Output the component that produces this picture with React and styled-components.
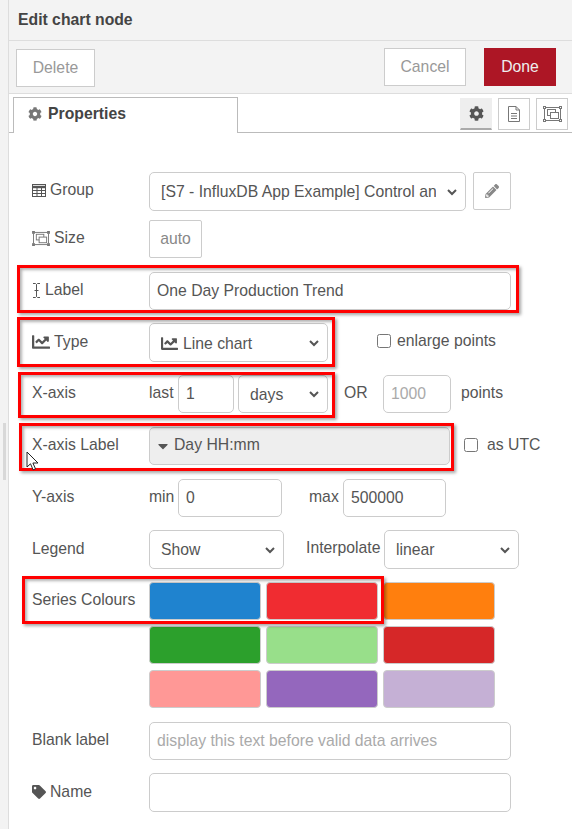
import React from 'react';
import styled, { createGlobalStyle } from 'styled-components';
import { FaCog, FaPencilAlt, FaTag, FaChartLine, FaCaretDown } from 'react-icons/fa';

const GlobalStyle = createGlobalStyle`
  html, body {
    margin: 0;
    padding: 0;
    background: #fff;
  }
  body {
    font-family: "Liberation Sans", Arial, sans-serif;
    font-size: 15.75px;
    color: #555;
  }
`;

const Page = styled.div`
  position: relative;
  display: flex;
  width: 572px;
  height: 829px;
  overflow: hidden;
`;

const Gutter = styled.div`
  position: relative;
  flex: 0 0 8px;
  background: #f3f3f3;
  border-right: 1px solid #ddd;
`;

const GutterHandle = styled.div`
  position: absolute;
  top: 423px;
  left: 3px;
  width: 3px;
  height: 57px;
  background: #d8d8d8;
`;

const Tray = styled.div`
  flex: 1;
  display: flex;
  flex-direction: column;
  min-width: 0;
`;

const TrayTitle = styled.div`
  height: 41px;
  box-sizing: border-box;
  padding: 11px 0 0 9px;
  background: #f3f3f3;
  border-bottom: 1px solid #ddd;
  font-size: 15.75px;
  font-weight: bold;
  line-height: 18px;
  color: #444;
`;

const Toolbar = styled.div`
  display: flex;
  height: 53px;
  box-sizing: border-box;
  padding: 7px 16px 0 7px;
  background: #f3f3f3;
  border-bottom: 1px solid #ddd;
`;

const Spacer = styled.div`
  flex: 1;
`;

const TrayButton = styled.button`
  box-sizing: border-box;
  width: ${p => p.$w}px;
  height: 38px;
  margin-left: ${p => p.$ml || 0}px;
  margin-top: ${p => p.$mt || 0}px;
  padding: 0;
  background: ${p => (p.$primary ? '#ad1625' : '#fff')};
  border: 1px solid ${p => (p.$primary ? '#ad1625' : '#ccc')};
  color: ${p => (p.$primary ? '#eee' : '#999')};
  font: 15.75px "Liberation Sans", Arial, sans-serif;
`;

const TabBar = styled.div`
  display: flex;
  height: 39px;
  box-sizing: border-box;
  padding: 3px 4px 0 4px;
  border-bottom: 1px solid #bbb;
`;

const Tab = styled.div`
  display: flex;
  align-items: flex-start;
  gap: 6px;
  box-sizing: border-box;
  width: 225px;
  height: 36px;
  padding: 7px 0 0 14px;
  background: #fff;
  border: 1px solid #bbb;
  border-bottom: none;
  font-size: 15.75px;
  font-weight: bold;
  line-height: 18px;
  color: #444;
  svg {
    color: #777;
    font-size: 14px;
    margin-top: 2px;
  }
`;

const TabIcons = styled.div`
  display: flex;
  gap: 6px;
  margin-left: auto;
`;

const TabIcon = styled.div`
  display: flex;
  align-items: center;
  justify-content: center;
  box-sizing: border-box;
  width: 32px;
  height: 32px;
  margin-top: 1px;
  background: ${p => (p.$active ? '#eee' : '#fff')};
  border: 1px solid #ccc;
  border-bottom: ${p => (p.$active ? '2px solid #aaa' : '1px solid #ccc')};
  border-color: ${p => (p.$active ? '#eee #eee #aaa' : '#ccc')};
  color: ${p => (p.$active ? '#555' : '#777')};
  font-size: 15px;
`;

const Form = styled.div`
  padding: 39px 0 0 23px;
`;

const Row = styled.div`
  display: flex;
  align-items: flex-start;
  margin-top: ${p => p.$mt || 0}px;
`;

const Label = styled.label`
  display: flex;
  align-items: center;
  gap: 4px;
  flex: 0 0 117px;
  height: ${p => p.$h || 36}px;
  color: #555;
  svg {
    flex: none;
    color: #555;
  }
`;

const ChartGlyph = styled(FaChartLine)`
  font-size: 18px;
`;

const TagGlyph = styled(FaTag)`
  font-size: 14px;
`;

const Inline = styled.span`
  display: flex;
  align-items: center;
  height: 36px;
  margin-left: ${p => p.$ml || 0}px;
  width: ${p => (p.$w ? `${p.$w}px` : 'auto')};
  color: #555;
`;

const Input = styled.input`
  box-sizing: border-box;
  width: ${p => p.$w}px;
  height: ${p => p.$h || 38}px;
  margin-left: ${p => p.$ml || 0}px;
  padding: 0 7px;
  background: #fff;
  border: 1px solid #ccc;
  border-radius: 5px;
  outline: none;
  font: 15.75px "Liberation Sans", Arial, sans-serif;
  color: #555;
  &::placeholder {
    color: #aaa;
    opacity: 1;
  }
`;

const chevronUrl = `url("data:image/svg+xml,%3Csvg xmlns='http://www.w3.org/2000/svg' width='12' height='12' viewBox='0 0 12 12'%3E%3Cpath d='M2 4l4 4 4-4' fill='none' stroke='%23555' stroke-width='2'/%3E%3C/svg%3E")`;

const Select = styled.select`
  appearance: none;
  box-sizing: border-box;
  width: ${p => p.$w}px;
  height: ${p => p.$h || 39}px;
  margin: 0 0 0 ${p => p.$ml || 0}px;
  padding: 0 29px 0 11px;
  background: #fff ${chevronUrl} no-repeat right 7px center;
  border: 1px solid #ccc;
  border-radius: 5px;
  outline: none;
  font: 15.75px "Liberation Sans", Arial, sans-serif;
  color: #555;
`;

const TypeField = styled.div`
  display: flex;
  align-items: center;
  gap: 5px;
  box-sizing: border-box;
  width: 179px;
  height: 39px;
  padding: 2px 7px 0 11px;
  background: #fff;
  border: 1px solid #ccc;
  border-radius: 5px;
  color: #555;
  svg {
    font-size: 17px;
  }
`;

const Chevron = styled.svg`
  margin-left: auto;
  margin-top: -2px;
  width: 12px;
  height: 12px;
`;

const FormatField = styled.div`
  display: flex;
  align-items: center;
  gap: 3px;
  box-sizing: border-box;
  width: 301px;
  height: 38px;
  padding: 0 0 2px 5px;
  background: #eee;
  border: 1px solid #ccc;
  border-radius: 5px;
  color: #555;
  svg {
    font-size: 16px;
    margin-top: 2px;
  }
`;

const IconButton = styled.button`
  display: flex;
  align-items: center;
  justify-content: center;
  box-sizing: border-box;
  width: ${p => p.$w}px;
  height: 38px;
  margin-left: ${p => p.$ml || 0}px;
  padding: 0;
  background: #fff;
  border: 1px solid #ccc;
  border-radius: 2px;
  color: #888;
  font: 15.75px "Liberation Sans", Arial, sans-serif;
  svg {
    font-size: 14px;
  }
`;

const CheckLabel = styled.label`
  display: flex;
  align-items: center;
  gap: ${p => p.$gap}px;
  height: 36px;
  margin-left: ${p => p.$ml}px;
  color: #555;
  input {
    width: 14px;
    height: 14px;
    margin: 0;
  }
`;

const Swatches = styled.div`
  display: grid;
  grid-template-columns: repeat(3, 112px);
  grid-auto-rows: 38px;
  gap: 6px 5px;
`;

const Swatch = styled.div`
  background: ${p => p.$color};
  border: 1px solid #ccc;
  border-radius: 4px;
`;

const Highlight = styled.div`
  position: absolute;
  top: ${p => p.$y}px;
  left: ${p => p.$x}px;
  width: ${p => p.$w}px;
  height: ${p => p.$h}px;
  box-sizing: border-box;
  border: 3px solid #f00;
  box-shadow: 2px 2px 3px rgba(0, 0, 0, 0.35), inset 2px 2px 3px rgba(0, 0, 0, 0.3);
  pointer-events: none;
`;

const Pointer = styled.svg`
  position: absolute;
  top: 451px;
  left: 26px;
`;

const ChevronIcon = () => (
  <Chevron viewBox="0 0 12 12">
    <path d="M2 4l4 4 4-4" fill="none" stroke="#555" strokeWidth="2" />
  </Chevron>
);

const SizeIcon = ({ w = 19, h = 16 }) => (
  <svg width={w} height={h} viewBox="0 0 19 16" fill="none" stroke="#777" strokeWidth="1">
    <rect x="1.5" y="1.5" width="16" height="13" />
    <rect x="4.5" y="3.5" width="8" height="6" />
    <rect x="7.5" y="6.5" width="8" height="6" fill="#fff" />
    <g fill="#fff">
      <rect x="0.5" y="0.5" width="2" height="2" />
      <rect x="16.5" y="0.5" width="2" height="2" />
      <rect x="0.5" y="13.5" width="2" height="2" />
      <rect x="16.5" y="13.5" width="2" height="2" />
    </g>
  </svg>
);

const FileIcon = () => (
  <svg width="14" height="16" viewBox="0 0 14 16" fill="none" stroke="#777" strokeWidth="1">
    <path d="M1.5 0.5h7.5l3.5 3.5v11.5h-11z" />
    <path d="M9 0.5v3.5h3.5" />
    <path d="M4 7.5h6M4 10h6M4 12.5h6" />
  </svg>
);

const TableIcon = () => (
  <svg width="14" height="13" viewBox="0 0 14 13" fill="none" stroke="#555" strokeWidth="1">
    <rect x="0.5" y="0.5" width="13" height="12" />
    <path d="M0 3h14" strokeWidth="2.4" />
    <path d="M0 6.5h14M0 9.5h14M5 3v10M9.5 3v10" />
  </svg>
);

const CursorIcon = () => (
  <svg width="9" height="15" viewBox="0 0 9 15" fill="none" stroke="#555" strokeWidth="1">
    <path d="M1 0.5h2.5L4.5 1.5 5.5 0.5H8M4.5 1.5v12M1 14.5h2.5l1-1 1 1H8M2.5 7.5h4" />
  </svg>
);

const colours = [
  '#1f83cf', '#f02c31', '#ff7f0e',
  '#2ca02c', '#98df8a', '#d62728',
  '#ff9896', '#9467bd', '#c5b0d5',
];

const highlights = [
  { x: 17, y: 265, w: 502, h: 48 },
  { x: 17, y: 317, w: 318, h: 50 },
  { x: 18, y: 372, w: 317, h: 46 },
  { x: 19, y: 423, w: 435, h: 48 },
  { x: 22, y: 576, w: 362, h: 48 },
];

export default function App() {
  return (
    <Page>
      <GlobalStyle />
      <Gutter>
        <GutterHandle />
      </Gutter>
      <Tray>
        <TrayTitle>Edit chart node</TrayTitle>
        <Toolbar>
          <TrayButton $w={79} $mt={1}>Delete</TrayButton>
          <Spacer />
          <TrayButton $w={82}>Cancel</TrayButton>
          <TrayButton $w={72} $ml={18} $primary>Done</TrayButton>
        </Toolbar>
        <TabBar>
          <Tab><FaCog />Properties</Tab>
          <TabIcons>
            <TabIcon $active><FaCog /></TabIcon>
            <TabIcon><FileIcon /></TabIcon>
            <TabIcon><SizeIcon /></TabIcon>
          </TabIcons>
        </TabBar>
        <Form>
          <Row>
            <Label><TableIcon />Group</Label>
            <Select $w={317} defaultValue="g">
              <option value="g">[S7 - InfluxDB App Example] Control and Monitor</option>
            </Select>
            <IconButton $w={38} $ml={7}><FaPencilAlt /></IconButton>
          </Row>
          <Row $mt={9}>
            <Label><SizeIcon w={18} h={15} />Size</Label>
            <IconButton $w={53}>auto</IconButton>
          </Row>
          <Row $mt={14}>
            <Label><CursorIcon />Label</Label>
            <Input $w={362} defaultValue="One Day Production Trend" />
          </Row>
          <Row $mt={13}>
            <Label $h={38}><ChartGlyph />Type</Label>
            <TypeField><FaChartLine />Line chart<ChevronIcon /></TypeField>
            <CheckLabel $ml={49} $gap={6}><input type="checkbox" />enlarge points</CheckLabel>
          </Row>
          <Row $mt={13}>
            <Label>X-axis</Label>
            <Inline $w={29}>last</Inline>
            <Input $w={56} defaultValue="1" />
            <Select $w={90} $h={38} $ml={4} defaultValue="d">
              <option value="d">days</option>
            </Select>
            <Inline $ml={16} $w={39}>OR</Inline>
            <Input $w={68} placeholder="1000" />
            <Inline $ml={10}>points</Inline>
          </Row>
          <Row $mt={14}>
            <Label>X-axis Label</Label>
            <FormatField><FaCaretDown />Day HH:mm</FormatField>
            <CheckLabel $ml={14} $gap={9}><input type="checkbox" />as UTC</CheckLabel>
          </Row>
          <Row $mt={14}>
            <Label>Y-axis</Label>
            <Inline $w={29}>min</Inline>
            <Input $w={104} defaultValue="0" />
            <Inline $ml={27} $w={34}>max</Inline>
            <Input $w={103} defaultValue="500000" />
          </Row>
          <Row $mt={13}>
            <Label $h={38}>Legend</Label>
            <Select $w={135} defaultValue="s">
              <option value="s">Show</option>
            </Select>
            <Inline $ml={22} $w={78}>Interpolate</Inline>
            <Select $w={135} defaultValue="l">
              <option value="l">linear</option>
            </Select>
          </Row>
          <Row $mt={13}>
            <Label>Series Colours</Label>
            <Swatches>
              {colours.map(c => <Swatch key={c} $color={c} />)}
            </Swatches>
          </Row>
          <Row $mt={14}>
            <Label>Blank label</Label>
            <Input $w={362} placeholder="display this text before valid data arrives" />
          </Row>
          <Row $mt={13}>
            <Label $h={38}><TagGlyph />Name</Label>
            <Input $w={362} $h={39} />
          </Row>
        </Form>
      </Tray>
      {highlights.map(h => <Highlight key={h.y} $x={h.x} $y={h.y} $w={h.w} $h={h.h} />)}
      <Pointer width="14" height="20" viewBox="0 0 14 20">
        <path d="M1 1v15l3.5-3.2 2.6 6 2.4-1-2.6-5.8H12z" fill="#fff" stroke="#222" strokeWidth="1" />
      </Pointer>
    </Page>
  );
}
